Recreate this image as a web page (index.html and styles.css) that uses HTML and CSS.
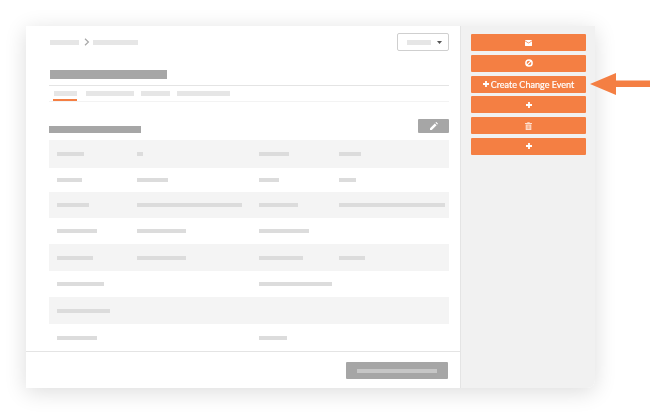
FILE: index.html
```html
<!DOCTYPE html>
<html lang="en">
<head>
<meta charset="utf-8">
<title>Create Change Event</title>
<link rel="stylesheet" href="styles.css">
</head>
<body>
<div class="card">
  <main class="main">
    <div class="content">
      <div class="crumbs">
        <span class="bar crumb" style="width:29px"></span>
        <svg class="chev" width="6" height="8" viewBox="0 0 6 8"><path d="M1 .8 4.400 4 1 7.200" fill="none" stroke="#a8a8a8" stroke-width="1.200"/></svg>
        <span class="bar crumb" style="width:45px"></span>
        <div class="select">
          <span class="bar crumb" style="width:24px"></span>
          <svg width="5" height="3" viewBox="0 0 5 3"><path d="M0 0h5L2.500 3z" fill="#555"/></svg>
        </div>
      </div>
      <div class="title"></div>
      <nav class="tabs">
        <div class="tab active"><span class="bar tabbar" style="width:23px"></span></div>
        <div class="tab"><span class="bar tabbar" style="width:48px"></span></div>
        <div class="tab"><span class="bar tabbar" style="width:29px"></span></div>
        <div class="tab"><span class="bar tabbar" style="width:53px"></span></div>
      </nav>
      <div class="section">
        <div class="heading"></div>
        <div class="edit">
          <svg width="8" height="8" viewBox="0 0 8 8"><path d="M0 8V6.200L4.800 1.400 6.600 3.200 1.800 8zM5.400.8 6 .2q.3-.2.600 0L7.800 1.400q.2.300 0 .6L7.200 2.600z" fill="#fff"/></svg>
        </div>
      </div>
      <div class="table">
        <div class="row"><span class="bar" style="width:27px"></span><span class="bar" style="width:6px"></span><span class="bar" style="width:30px"></span><span class="bar" style="width:22px"></span></div>
        <div class="row"><span class="bar" style="width:25px"></span><span class="bar" style="width:31px"></span><span class="bar" style="width:20px"></span><span class="bar" style="width:17px"></span></div>
        <div class="row"><span class="bar" style="width:32px"></span><span class="bar" style="width:105px"></span><span class="bar" style="width:39px"></span><span class="bar" style="width:106px"></span></div>
        <div class="row"><span class="bar" style="width:40px"></span><span class="bar" style="width:49px"></span><span class="bar" style="width:50px"></span><span></span></div>
        <div class="row"><span class="bar" style="width:36px"></span><span class="bar" style="width:49px"></span><span class="bar" style="width:44px"></span><span class="bar" style="width:26px"></span></div>
        <div class="row"><span class="bar" style="width:47px"></span><span></span><span class="bar" style="width:73px"></span><span></span></div>
        <div class="row"><span class="bar" style="width:53px"></span><span></span><span></span><span></span></div>
        <div class="row"><span class="bar" style="width:40px"></span><span></span><span class="bar" style="width:28px"></span><span></span></div>
      </div>
    </div>
    <footer class="footer">
      <div class="submit"><span class="submit-bar"></span></div>
    </footer>
  </main>
  <aside class="side">
    <div class="btn">
      <svg width="7" height="6" viewBox="0 0 7 6"><path d="M0 .6Q0 0 .6 0h5.800Q7 0 7 .6L3.500 2.800zM0 1.300 3.500 3.500 7 1.300v4.100Q7 6 6.400 6H.6Q0 6 0 5.400z" fill="#fff"/></svg>
    </div>
    <div class="btn">
      <svg width="8" height="8" viewBox="0 0 8 8"><circle cx="4" cy="4" r="3.100" fill="none" stroke="#fff" stroke-width="1.500"/><path d="M1.900 6.100 6.100 1.900" stroke="#fff" stroke-width="1.300"/></svg>
    </div>
    <div class="btn btn-label">
      <svg class="plus" width="6" height="6" viewBox="0 0 6 6"><path d="M2.100 0h1.800v2.100H6v1.800H3.900V6H2.100V3.900H0V2.100h2.100z" fill="#fff"/></svg>
      <span>Create Change Event</span>
    </div>
    <div class="btn">
      <svg width="6" height="6" viewBox="0 0 6 6"><path d="M2.100 0h1.800v2.100H6v1.800H3.900V6H2.100V3.900H0V2.100h2.100z" fill="#fff"/></svg>
    </div>
    <div class="btn">
      <svg width="7" height="8" viewBox="0 0 7 8"><path d="M0 1h2.300V.2h2.400V1H7v.9H0zM.7 2.400h5.600V8H.7z" fill="#fde0d0"/><path d="M2.200 3.300v3.800M3.500 3.300v3.800M4.800 3.300v3.800" stroke="#f47f43" stroke-width=".5"/></svg>
    </div>
    <div class="btn">
      <svg width="6" height="6" viewBox="0 0 6 6"><path d="M2.100 0h1.800v2.100H6v1.800H3.900V6H2.100V3.900H0V2.100h2.100z" fill="#fff"/></svg>
    </div>
  </aside>
</div>
<svg class="arrow" width="60" height="24" viewBox="0 0 60 24"><path d="M0 12 26 1V8.500H60V15H26V23z" fill="#f47f43"/></svg>
</body>
</html>
```
FILE: styles.css
```css
* { box-sizing: border-box; }
html, body { margin: 0; height: 100%; background: #fff; overflow: hidden; }
body { position: relative; padding: 26px 0 0 26px; font-family: "Lato", "Liberation Sans", sans-serif; }

.card {
  display: flex;
  width: 569px;
  height: 362px;
  background: #fff;
  border-bottom-right-radius: 8px;
  box-shadow: 0 4px 22px rgba(0, 0, 0, .14);
  filter: blur(.35px);
}

.main {
  display: flex;
  flex-direction: column;
  width: 435px;
  border-right: 1px solid #e4e4e4;
}

.content { flex: 1; min-height: 0; display: flex; flex-direction: column; padding: 7px 11px 0 23px; }

.bar { display: block; height: 4px; background: #dcdcdc; }
.crumb { background: #e6e6e6; height: 5px; }

.crumbs { display: flex; align-items: center; height: 18px; padding-left: 1px; }
.chev { margin: 0 3px 0 5px; }
.select {
  margin-left: auto;
  display: flex;
  align-items: center;
  gap: 6px;
  width: 52px;
  height: 18px;
  padding-left: 9px;
  border: 1px solid #cfcfcf;
  border-radius: 2px;
}

.title { width: 117px; height: 9px; margin: 19px 0 0 1px; background: #a6a6a6; }

.tabs {
  display: flex;
  gap: 7px;
  height: 17px;
  margin-top: 6px;
  padding-left: 4px;
  border-top: 1px solid #e4e4e4;
  border-bottom: 1px solid #f3f3f3;
}
.tab { padding-top: 5px; }
.tabbar { height: 5px; background: #e6e6e6; }
.tab.active { height: 15px; padding-left: 1px; margin-right: 2px; border-bottom: 2px solid #f47f43; }

.section { display: flex; align-items: flex-end; justify-content: space-between; height: 18px; margin-top: 13px; }
.heading { width: 92px; height: 7px; background: #a6a6a6; }
.edit { display: flex; align-items: center; justify-content: center; width: 31px; height: 14px; background: #a6a6a6; border-radius: 1px; }

.table {
  display: grid;
  grid-template-rows: 28px 24px 26px 26px 27px 26px 27px 27px;
  margin-top: 7px;
}
.row {
  display: grid;
  grid-template-columns: 80px 122px 80px 1fr;
  align-items: center;
  padding-left: 8px;
}
.row:nth-child(odd) { background: #f4f4f4; }

.footer {
  display: flex;
  justify-content: flex-end;
  height: 37px;
  padding: 10px 12px 0 0;
  border-top: 1px solid #e4e4e4;
}
.submit {
  display: flex;
  align-items: center;
  justify-content: center;
  width: 102px;
  height: 17px;
  background: #a6a6a6;
  border-radius: 1px;
}
.submit-bar { display: block; width: 80px; height: 4px; background: #c6c6c6; }

.side {
  flex: 1;
  display: flex;
  flex-direction: column;
  gap: 3.8px;
  padding: 8px 9px 0 10px;
  background: #f1f1f1;
  border-bottom-right-radius: 8px;
}
.btn {
  display: flex;
  align-items: center;
  justify-content: center;
  height: 17px;
  background: #f47f43;
  border-radius: 1px;
}
.btn-label {
  gap: 2px;
  color: #fff;
  font-size: 9px;
  line-height: 1;
  letter-spacing: .03px;
  -webkit-text-stroke: .2px #fff;
}

.arrow { position: absolute; left: 590px; top: 72px; filter: blur(.3px); }
```
